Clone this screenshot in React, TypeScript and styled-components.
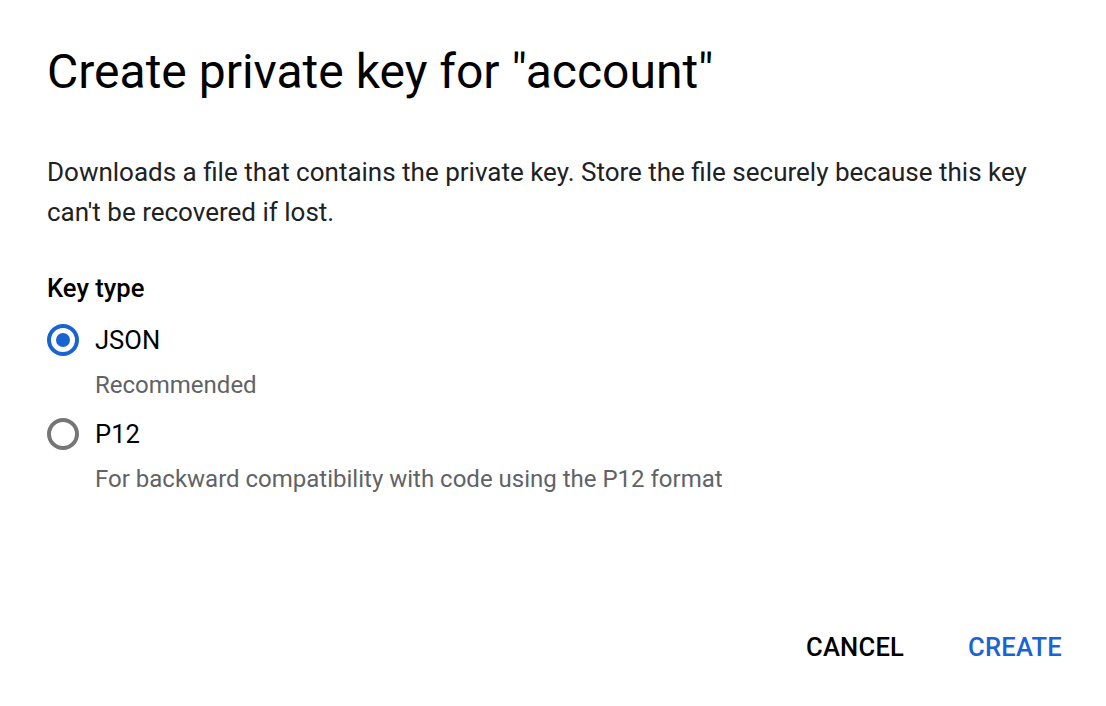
import React, { useState } from 'react';
import styled, { createGlobalStyle } from 'styled-components';

const GlobalStyle = createGlobalStyle`
  html, body {
    margin: 0;
    padding: 0;
    background: #fff;
  }
  body {
    font-family: Roboto, 'Liberation Sans', Arial, sans-serif;
    color: #202124;
  }
`;

const Dialog = styled.div`
  width: 1106px;
  height: 706px;
  box-sizing: border-box;
  padding: 40px 44px 0 47px;
  display: flex;
  flex-direction: column;
`;

const Title = styled.h1`
  margin: 0;
  font-size: 48px;
  font-weight: 400;
  line-height: 64px;
  color: #000;
`;

const Body = styled.p`
  margin: 48px 0 0;
  font-size: 26px;
  line-height: 40px;
  color: #202124;
`;

const Label = styled.div`
  margin-top: 38px;
  font-size: 25.6px;
  font-weight: 500;
  line-height: 36px;
  color: #000;
`;

const Options = styled.div`
  margin-top: 8px;
  display: flex;
  flex-direction: column;
`;

const Option = styled.label`
  display: grid;
  grid-template-columns: 32px 1fr;
  column-gap: 16px;
  cursor: pointer;
`;

const Radio = styled.span<{ $checked: boolean; }>`
  width: 32px;
  height: 32px;
  box-sizing: border-box;
  border-radius: 50%;
  border: 4px solid ${({ $checked, }) => ($checked ? '#1a63d2' : '#767676')};
  display: flex;
  align-items: center;
  justify-content: center;
  align-self: center;

  &::after {
    content: '';
    width: 14px;
    height: 14px;
    border-radius: 50%;
    background: ${({ $checked, }) => ($checked ? '#1a63d2' : 'transparent')};
  }
`;

const OptionName = styled.span`
  font-size: 25.6px;
  line-height: 52px;
  color: #000;
`;

const OptionHint = styled.span`
  grid-column: 2;
  font-size: 24px;
  line-height: 36px;
  padding-top: 1px;
  color: #5f6368;
  margin-bottom: 5px;
`;

const Actions = styled.div`
  margin-top: auto;
  margin-bottom: 37px;
  display: flex;
  justify-content: flex-end;
  gap: 64px;
`;

const TextButton = styled.button<{ $primary?: boolean; }>`
  background: none;
  border: none;
  padding: 0;
  font-family: inherit;
  font-size: 25.6px;
  font-weight: 500;
  line-height: 44px;
  letter-spacing: 0.2px;
  color: ${({ $primary, }) => ($primary ? '#1a63d2' : '#000')};
  cursor: pointer;
`;

const options = [
  { id: 'json', name: 'JSON', hint: 'Recommended', },
  { id: 'p12', name: 'P12', hint: 'For backward compatibility with code using the P12 format', },
];

export default function App() {
  const [ keyType, setKeyType, ] = useState('json');

  return (
    <>
      <GlobalStyle />
      <Dialog>
        <Title>Create private key for &quot;account&quot;</Title>
        <Body>
          Downloads a file that contains the private key. Store the file securely because this key
          can&apos;t be recovered if lost.
        </Body>
        <Label>Key type</Label>
        <Options>
          {options.map((opt) => (
            <Option key={opt.id} onClick={() => setKeyType(opt.id)}>
              <Radio $checked={keyType === opt.id} />
              <OptionName>{opt.name}</OptionName>
              <OptionHint>{opt.hint}</OptionHint>
            </Option>
          ))}
        </Options>
        <Actions>
          <TextButton type='button'>CANCEL</TextButton>
          <TextButton type='button' $primary>CREATE</TextButton>
        </Actions>
      </Dialog>
    </>
  );
}
